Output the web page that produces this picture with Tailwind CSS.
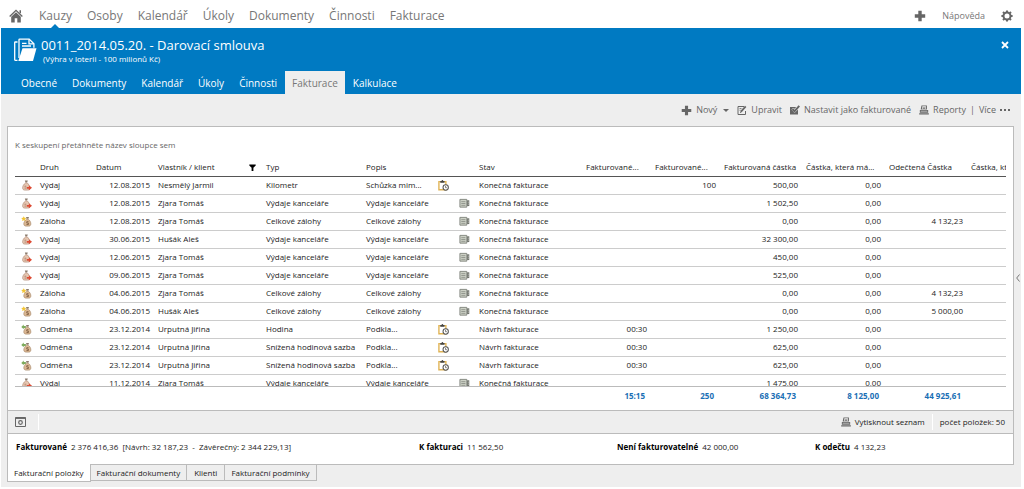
<!DOCTYPE html>
<html lang="cs">
<head>
<meta charset="utf-8">
<title>0011_2014.05.20. - Darovací smlouva</title>
<script src="https://cdn.jsdelivr.net/npm/@tailwindcss/browser@4"></script>
</head>
<body class="flex h-screen min-h-96 flex-col overflow-hidden bg-white pb-0.5 pl-px pr-[3px] font-['Open_Sans','Noto_Sans',sans-serif] text-[8px] leading-3 text-[#222]">

<svg class="hidden" xmlns="http://www.w3.org/2000/svg">
  <symbol id="i-plus" viewBox="0 0 12 12"><path fill="currentColor" d="M4.300.800h3.400v3.500h3.500v3.400H7.700v3.500H4.300V7.700H.800V4.300h3.500z"/></symbol>
  <symbol id="i-printer" viewBox="0 0 12 12"><path fill="currentColor" d="M3 .5h6.500v5H2zM1 6h10v3.200H1z"/><path fill="#eee" d="M4 1.500h4.300l-.3 3.700H3.500z"/><path fill="currentColor" d="M4.500 2.300h3v.8h-3zM4.300 4h3v.7h-3zM.2 9.800h11.600V11.500H.2z"/><path fill="#eee" d="M2 7h8v.7H2z"/></symbol>
  <symbol id="i-spend" viewBox="0 0 12 12"><path fill="#8a7a6c" d="M4.200.5h3.200L6.700 2.600H4.900z"/><path fill="#e6c7b2" stroke="#b58e78" stroke-width=".8" d="M4.900 3.200h1.900c1.800 1.400 2.600 3.500 2.600 5.300 0 1.700-.9 2.500-2.200 2.500H4.100C2.600 11 1.800 10.200 1.800 8.500c0-1.800 1.200-3.900 3.100-5.300z"/><path fill="none" stroke="#a0705a" stroke-width=".8" d="M3.800 6.800h2M3.800 8.800h2"/><path fill="#dd4a32" d="M6.300 7.500h2.300V5.600L12 8.500l-3.400 2.900V9.500H6.300z"/></symbol>
  <symbol id="i-advance" viewBox="0 0 12 12"><path fill="#8a7a6c" d="M5.500 1h3.200L8 3H6z"/><path fill="#dcb894" stroke="#a98a6c" stroke-width=".8" d="M6 3.500h2c1.800 1.400 2.700 3.300 2.700 5 0 1.700-.9 2.500-2.200 2.500h-3c-1.600 0-2.400-.8-2.400-2.500 0-1.700 1.100-3.600 2.900-5z"/><path fill="none" stroke="#7a5a3e" stroke-width=".9" d="M8.200 6.200H6.300v1.500h1.800v1.600H6"/><path fill="#f3c638" d="m3 .3.9 1.700 1.900.2-1.400 1.400.4 1.900L3 4.600l-1.800.9.4-1.900L.200 2.200 2.100 2z"/></symbol>
  <symbol id="i-reward" viewBox="0 0 12 12"><path fill="#8a7a6c" d="M5.500 1h3.200L8 3H6z"/><path fill="#dcb894" stroke="#a98a6c" stroke-width=".8" d="M6 3.500h2c1.800 1.400 2.700 3.300 2.700 5 0 1.700-.9 2.500-2.200 2.500h-3c-1.600 0-2.400-.8-2.400-2.500 0-1.700 1.100-3.600 2.900-5z"/><path fill="none" stroke="#7a5a3e" stroke-width=".9" d="M8.200 6.200H6.300v1.500h1.800v1.600H6"/><path fill="#7dab5c" d="M.3 3.200 3 .6v1.500h2.300v2.200H3v1.500z"/></symbol>
  <symbol id="i-clip" viewBox="0 0 12 12"><path fill="#fff" stroke="#e0b455" stroke-width="1.500" d="M1 1.800h7.600v8.900H1z"/><path fill="#444" d="M2.500 1h1.300C4 .3 4.300 0 4.800 0s.8.3 1 1h1.300v2H2.500z"/><circle cx="8.400" cy="8.200" r="2.900" fill="#fff" stroke="#555" stroke-width="1.100"/><path fill="none" stroke="#555" stroke-width=".8" d="M8.200 6.600v1.800h1.500"/></symbol>
  <symbol id="i-book" viewBox="0 0 12 12"><path fill="#cdd1c6" stroke="#80847c" d="M1 1.500h7.500v8.500H1z"/><path fill="none" stroke="#80847c" stroke-width=".8" d="M2.500 4h4.500M2.500 6h4.500M2.500 8h4.500"/><path fill="#70746c" d="M8.800 2.500h2.400v6.300H8.800z"/><path fill="#fff" d="M9.700 4h.8v1h-.8zM9.700 6.200h.8v1h-.8z"/></symbol>
</svg>

<nav class="flex h-7 shrink-0 items-center pl-2 pr-2 pt-1 text-[12px] leading-4 text-[#777]">
  <a href="#" aria-label="Domů" class="mr-4"><svg class="size-[14px]" viewBox="0 0 14 14" fill="#666"><path d="M7 .5 13.800 7l-.9.9L7 2.300 1.100 7.900.2 7z"/><path d="M10.500 1.200H12v3.600l-1.500-1.500z"/><path d="M7 3.200 11.800 7.700V13.500H8.300V9.300H5.700v4.200H2.200V7.700z"/></svg></a>
  <div class="flex gap-[15px]">
    <a href="#" class="relative">Kauzy<span class="absolute -bottom-1 left-3 border-x-4 border-b-4 border-x-transparent border-b-[#007ac2]"></span></a>
    <a href="#">Osoby</a><a href="#">Kalendář</a><a href="#">Úkoly</a><a href="#">Dokumenty</a><a href="#">Činnosti</a><a href="#">Fakturace</a>
  </div>
  <button class="ml-auto mr-4" aria-label="Přidat"><svg class="size-3 text-[#666]"><use href="#i-plus"/></svg></button>
  <a href="#" class="mr-4 text-[9px]">Nápověda</a>
  <button aria-label="Nastavení"><svg class="size-3" viewBox="0 0 12 12"><circle cx="6" cy="6" r="3.500" fill="none" stroke="#666" stroke-width="2"/><path stroke="#666" stroke-width="2" d="M6 .4v1.800M6 9.800v1.800M.4 6h1.800M9.800 6h1.800M2 2l1.300 1.300M8.700 8.700 10 10M2 10l1.300-1.300M8.700 3.300 10 2"/></svg></button>
</nav>

<header class="flex shrink-0 flex-col bg-[#007ac2] text-white">
  <div class="flex h-[43px] items-start pl-[13px] pr-3 pt-[9px]">
    <svg class="mr-1 mt-px h-6 w-[23px] shrink-0" viewBox="0 0 23 24" fill="none"><path stroke="#fff" stroke-width="1.300" d="M3.500 22.300H1.300q-.6 0-.6-.6V4.600q0-.6.6-.6h2.200M5 20V1.700q0-.6.600-.6h9.600l4.700 4.600v4"/><path stroke="#fff" stroke-width="1.300" d="M15 1.300v4.600h4.700M8 5.300h4.500M8 8h9"/><path fill="#fff" d="M8.500 10.300H22.500L19 22.900H4.300z"/></svg>
    <div>
      <h1 class="text-[13px] leading-4">0011_2014.05.20. - Darovací smlouva</h1>
      <p class="pl-0.5 text-[8px] leading-3">(Výhra v loterii - 100 milionů Kč)</p>
    </div>
    <button class="ml-auto mt-1" aria-label="Zavřít"><svg class="size-2" viewBox="0 0 8 8"><path stroke="#fff" stroke-width="1.800" d="m1 1 6 6M7 1 1 7"/></svg></button>
  </div>
  <div class="flex h-[23px] gap-px pl-[13px] text-[10px] leading-[25px]">
    <a href="#" class="px-[7px]">Obecné</a><a href="#" class="px-[7px]">Dokumenty</a><a href="#" class="px-[7px]">Kalendář</a><a href="#" class="px-[7px]">Úkoly</a><a href="#" class="px-[7px]">Činnosti</a><a href="#" class="bg-[#eee] px-[7px] text-[#777]">Fakturace</a><a href="#" class="px-[7px]">Kalkulace</a>
  </div>
</header>

<main class="flex min-h-0 flex-1 flex-col bg-[#eee] pb-1.5 pl-1.5 pr-[7px]">
  <div class="flex h-8 shrink-0 items-center justify-end pr-1 text-[9px] text-[#666]">
    <button class="flex items-center gap-1"><svg class="size-[11px]"><use href="#i-plus"/></svg>Nový<span class="ml-0.5 border-x-[3px] border-t-[3px] border-x-transparent border-t-[#666]"></span></button>
    <button class="ml-2 flex items-center gap-1"><svg class="size-[10px]" viewBox="0 0 10 10" fill="none" stroke="#666"><path d="M7 1.500H1v8h7.500V6"/><path stroke-width="1.800" d="M3.800 6.800 8.700 1.300"/><path stroke-width=".8" d="M2.500 3.500h2M2.500 5.200h1.200M3 8l1-1"/></svg>Upravit</button>
    <button class="ml-2 flex items-center gap-1"><svg class="size-[10px]" viewBox="0 0 10 10" fill="#666"><path d="M0 2h6L5 3.800 3 3 1.500 4.500l3 3.500L8 4.500V9.500H0z"/><path fill="none" stroke="#666" stroke-width="2" d="m2.500 4 2 2.300L9.300.8"/></svg>Nastavit jako fakturované</button>
    <button class="ml-2 flex items-center gap-1"><svg class="size-[10px]"><use href="#i-printer"/></svg>Reporty</button>
    <span class="mx-1">|</span>
    <button class="flex items-center gap-1">Více<span class="flex gap-0.5"><i class="size-0.5 bg-[#666]"></i><i class="size-0.5 bg-[#666]"></i><i class="size-0.5 bg-[#666]"></i></span></button>
  </div>

  <div class="relative flex min-h-0 flex-1 flex-col">
    <section class="flex min-h-0 flex-1 flex-col border border-[#bbb] bg-white">
      <div class="mx-[7px] flex min-h-0 flex-1 flex-col overflow-hidden">
        <p class="shrink-0 pb-2 pt-3 text-[#666]">K seskupení přetáhněte název sloupce sem</p>
        <div class="min-h-0 flex-1 overflow-hidden border-b border-[#bbb]">
          <table class="w-[1087px] table-fixed border-collapse whitespace-nowrap">
            <colgroup><col class="w-[21px]"><col class="w-[56px]"><col class="w-[62px]"><col class="w-[108px]"><col class="w-[100px]"><col class="w-[72px]"><col class="w-[21px]"><col class="w-[20px]"><col class="w-[107px]"><col class="w-[69px]"><col class="w-[69px]"><col class="w-[82px]"><col class="w-[83px]"><col class="w-[82px]"><col></colgroup>
            <thead>
              <tr class="h-[17px] border-b border-[#555] text-left *:px-1 *:font-normal">
                <th></th><th>Druh</th><th>Datum</th>
                <th><span class="flex items-center justify-between">Vlastník / klient<svg class="mr-0.5 size-[7px]" viewBox="0 0 7 7"><path d="M.3.5h6.400v1L4.400 3.800V7H2.600V3.800L.3 1.500z"/></svg></span></th>
                <th>Typ</th><th>Popis</th><th></th><th></th><th>Stav</th><th>Fakturované...</th><th>Fakturované...</th><th>Fakturovaná částka</th><th>Částka, která má...</th><th>Odečtená Částka</th><th>Částka, která má...</th>
              </tr>
            </thead>
            <tbody id="rows"></tbody>
          </table>
        </div>
        <table class="w-[1087px] shrink-0 table-fixed whitespace-nowrap font-bold text-[#1a6fb5]">
          <colgroup><col class="w-[567px]"><col class="w-[69px]"><col class="w-[69px]"><col class="w-[82px]"><col class="w-[83px]"><col class="w-[82px]"><col></colgroup>
          <tbody><tr class="h-[23px] text-right align-top *:px-1.5 *:pt-[3px]"><td></td><td>15:15</td><td>250</td><td>68 364,73</td><td>8 125,00</td><td>44 925,61</td><td></td></tr></tbody>
        </table>
      </div>
      <div class="flex h-6 shrink-0 items-center border-y border-[#bbb] bg-[#eee] pl-[7px] pr-2">
        <button aria-label="Náhled"><svg class="h-[10px] w-[11px]" viewBox="0 0 11 10" fill="none" stroke="#666"><path d="M.5.500h10v9H.5z"/><path stroke-width="1.500" d="M.5 1.200h10"/><circle cx="5.500" cy="5.500" r="1.800" stroke-width="1.200"/></svg></button>
        <span class="ml-3 h-4 w-px bg-white"></span>
        <button class="ml-auto flex items-center gap-1"><svg class="size-[10px] text-[#666]"><use href="#i-printer"/></svg>Vytisknout seznam</button>
        <span class="mx-[7px] h-4 w-px bg-white"></span>
        <span>počet položek: 50</span>
      </div>
      <dl class="grid h-[30px] shrink-0 grid-cols-[403fr_198fr_198fr_190fr] items-center pb-1 pl-2 pr-2 *:flex *:gap-1 [&_dt]:font-bold [&_dt]:text-black">
        <div><dt>Fakturované</dt><dd class="whitespace-pre">2 376 416,36  [Návrh: 32 187,23  -  Závěrečný: 2 344 229,13]</dd></div>
        <div><dt>K fakturaci</dt><dd>11 562,50</dd></div>
        <div><dt>Není fakturovatelné</dt><dd>42 000,00</dd></div>
        <div><dt>K odečtu</dt><dd>4 132,23</dd></div>
      </dl>
    </section>
    <div class="flex h-4 shrink-0 items-start">
      <button class="relative -mt-px h-[18px] border border-t-0 border-[#bbb] bg-white px-[6px]">Fakturační položky</button>
      <button class="h-4 border-b border-r border-[#bbb] px-[6px]">Fakturační dokumenty</button>
      <button class="h-4 border-b border-r border-[#bbb] px-[7px]">Klienti</button>
      <button class="h-4 border-b border-r border-[#bbb] px-[6px]">Fakturační podmínky</button>
    </div>
    <button aria-label="Rozbalit panel" class="absolute -right-1.5 top-[148px]"><svg class="h-2 w-1" viewBox="0 0 4 8"><path fill="none" stroke="#777" d="M3.500.5.700 4l2.800 3.500"/></svg></button>
  </div>
</main>

<script>
  const rows = [
    ["Výdaj","12.08.2015","Nesmělý Jarmil","Kilometr","Schůzka mim...","clip","Konečná fakturace","","100","500,00","0,00",""],
    ["Výdaj","12.08.2015","Zjara Tomáš","Výdaje kanceláře","Výdaje kanceláře","book","Konečná fakturace","","","1 502,50","0,00",""],
    ["Záloha","12.08.2015","Zjara Tomáš","Celkové zálohy","Celkové zálohy","book","Konečná fakturace","","","0,00","0,00","4 132,23"],
    ["Výdaj","30.06.2015","Hušák Aleš","Výdaje kanceláře","Výdaje kanceláře","book","Konečná fakturace","","","32 300,00","0,00",""],
    ["Výdaj","12.06.2015","Zjara Tomáš","Výdaje kanceláře","Výdaje kanceláře","book","Konečná fakturace","","","450,00","0,00",""],
    ["Výdaj","09.06.2015","Zjara Tomáš","Výdaje kanceláře","Výdaje kanceláře","book","Konečná fakturace","","","525,00","0,00",""],
    ["Záloha","04.06.2015","Zjara Tomáš","Celkové zálohy","Celkové zálohy","book","Konečná fakturace","","","0,00","0,00","4 132,23"],
    ["Záloha","04.06.2015","Hušák Aleš","Celkové zálohy","Celkové zálohy","book","Konečná fakturace","","","0,00","0,00","5 000,00"],
    ["Odměna","23.12.2014","Urputná Jiřina","Hodina","Podkla...","clip","Návrh fakturace","00:30","","1 250,00","0,00",""],
    ["Odměna","23.12.2014","Urputná Jiřina","Snížená hodinová sazba","Podkla...","clip","Návrh fakturace","00:30","","625,00","0,00",""],
    ["Odměna","23.12.2014","Urputná Jiřina","Snížená hodinová sazba","Podkla...","clip","Návrh fakturace","00:30","","625,00","0,00",""],
    ["Výdaj","11.12.2014","Zjara Tomáš","Výdaje kanceláře","Výdaje kanceláře","book","Konečná fakturace","","","1 475,00","0,00",""]
  ];
  const kinds = { "Výdaj": "i-spend", "Záloha": "i-advance", "Odměna": "i-reward" };
  const icon = (id) => `<svg class="size-[11px]"><use href="#${id}"/></svg>`;
  document.getElementById("rows").innerHTML = rows.map(r => `
    <tr class="h-[18px] border-b border-[#ccc]">
      <td class="pl-[6px]">${icon(kinds[r[0]])}</td><td class="px-1">${r[0]}</td><td class="px-1 text-right">${r[1]}</td><td class="px-1">${r[2]}</td><td class="px-1">${r[3]}</td><td class="px-1">${r[4]}</td>
      <td class="px-1">${r[5] === "clip" ? icon("i-clip") : ""}</td><td class="px-1">${r[5] === "book" ? icon("i-book") : ""}</td><td class="px-1">${r[6]}</td>
      ${r.slice(7).map(v => `<td class="px-1 text-right">${v}</td>`).join("")}<td></td>
    </tr>`).join("");
</script>
</body>
</html>
